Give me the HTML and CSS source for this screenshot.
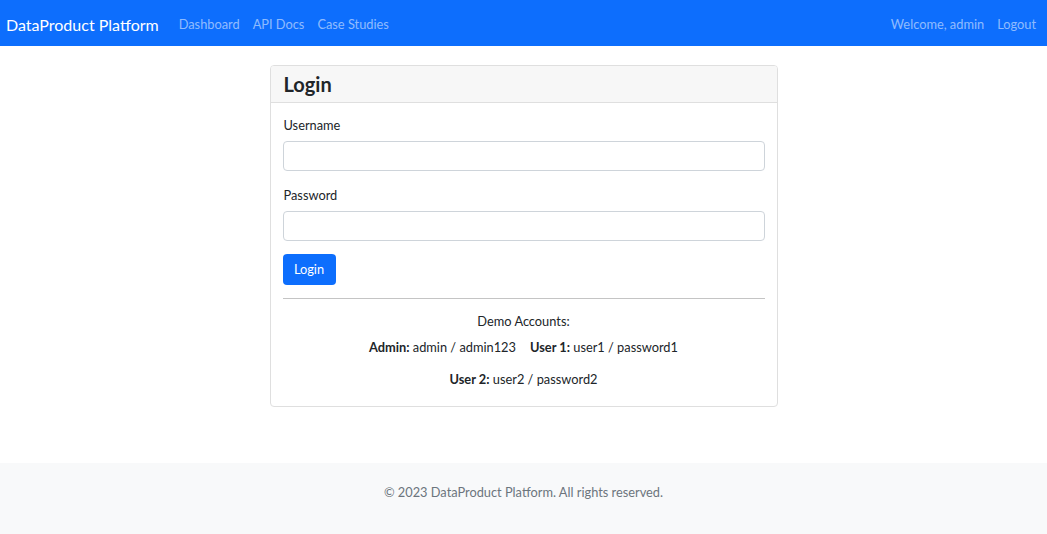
FILE: index.html
```html
<!DOCTYPE html>
<html lang="en">
<head>
<meta charset="utf-8">
<title>Login - DataProduct Platform</title>
<link rel="stylesheet" href="styles.css">
</head>
<body>
<nav class="navbar">
  <div class="nav-left">
    <a class="brand" href="#">DataProduct Platform</a>
    <a class="nav-link" href="#">Dashboard</a>
    <a class="nav-link" href="#">API Docs</a>
    <a class="nav-link" href="#">Case Studies</a>
  </div>
  <div class="nav-right">
    <span class="nav-link">Welcome, admin</span>
    <a class="nav-link" href="#">Logout</a>
  </div>
</nav>
<main class="main">
  <div class="card">
    <div class="card-header"><h1 class="card-title">Login</h1></div>
    <div class="card-body">
      <form class="form">
        <div class="field">
          <label class="label" for="username">Username</label>
          <input class="input" id="username" type="text">
        </div>
        <div class="field">
          <label class="label" for="password">Password</label>
          <input class="input" id="password" type="password">
        </div>
        <button class="btn" type="button">Login</button>
      </form>
      <hr class="divider">
      <div class="demo">
        <p class="demo-title">Demo Accounts:</p>
        <div class="demo-row">
          <span class="demo-item"><strong>Admin:</strong> admin / admin123</span>
          <span class="demo-item"><strong>User 1:</strong> user1 / password1</span>
        </div>
        <div class="demo-row">
          <span class="demo-item"><strong>User 2:</strong> user2 / password2</span>
        </div>
      </div>
    </div>
  </div>
</main>
<footer class="footer">
  <p class="footer-text">© 2023 DataProduct Platform. All rights reserved.</p>
</footer>
</body>
</html>
```

FILE: styles.css
```css
* { box-sizing: border-box; }
html, body { margin: 0; padding: 0; }
body {
  font-family: Lato, "Open Sans", "Liberation Sans", sans-serif;
  font-size: 12.8px;
  line-height: 21px;
  color: #212529;
  background: #fff;
}
a { text-decoration: none; }

.navbar {
  height: 46px;
  background: #0d6efd;
  display: flex;
  align-items: center;
  justify-content: space-between;
  padding: 2px 11px 0 6px;
}
.nav-left, .nav-right {
  display: flex;
  align-items: center;
}
.brand {
  color: #fff;
  font-size: 16px;
  margin-right: 20px;
}
.nav-link {
  color: rgba(255, 255, 255, 0.55);
  font-size: 12.8px;
  margin-right: 13px;
}
.nav-right .nav-link:last-child { margin-right: 0; }
.nav-left .nav-link:last-child { margin-right: 0; }

.main {
  display: flex;
  justify-content: center;
  padding: 19px 0 56px;
}
.card {
  width: 508px;
  border: 1px solid #dfdfdf;
  border-radius: 4px;
  background: #fff;
}
.card-header {
  height: 37px;
  background: #f7f7f7;
  border-bottom: 1px solid #dfdfdf;
  border-radius: 3px 3px 0 0;
  padding: 0 13px;
  display: flex;
  align-items: center;
}
.card-title {
  margin: 0;
  font-size: 20px;
  font-weight: 700;
  line-height: 24px;
}
.card-body {
  padding: 12px 12px 16px;
}
.field {
  display: flex;
  flex-direction: column;
  margin-bottom: 14px;
}
.field:nth-child(2) { margin-bottom: 13px; }
.label {
  margin-bottom: 5px;
  padding-left: 1px;
}
.input {
  height: 30px;
  border: 1px solid #ced4da;
  border-radius: 4px;
  font: inherit;
  padding: 0 10px;
  outline: none;
}
.btn {
  display: block;
  height: 31px;
  width: 53px;
  padding: 0;
  border: 0;
  border-radius: 4px;
  background: #0d6efd;
  color: #fff;
  font: inherit;
  cursor: pointer;
}
.divider {
  margin: 13px 0 0;
  border: 0;
  border-top: 1px solid #c4c4c4;
}
.demo {
  text-align: center;
  padding-top: 12px;
}
.demo-title { margin: 0 0 5px; }
.demo-row {
  display: flex;
  justify-content: center;
  column-gap: 14px;
  margin-bottom: 11px;
}
.demo-row:last-child { margin-bottom: 0; }
.demo-item strong { font-weight: 700; }

.footer {
  background: #f8f9fa;
  padding: 19px 0 32px;
  text-align: center;
}
.footer-text {
  margin: 0;
  color: #6c757d;
}
```
